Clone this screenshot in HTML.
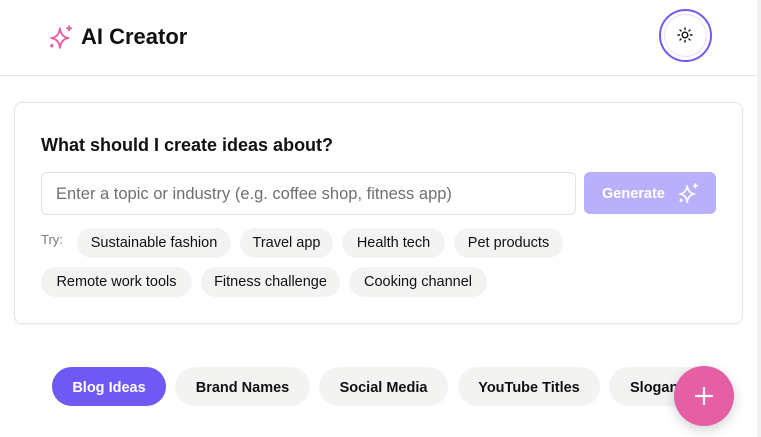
<!DOCTYPE html>
<html><head><meta charset="utf-8">
<style>
*{box-sizing:border-box;margin:0;padding:0}
body{width:761px;height:437px;overflow:hidden;background:#fff;font-family:"Liberation Sans",sans-serif;position:relative;color:#111}
.a{position:absolute}
.hdr{left:0;top:0;width:761px;height:76px;border-bottom:1px solid #e5e5e5}
.logo{left:81px;top:24px;font-size:22px;font-weight:bold;color:#111}
.theme{left:659px;top:9px;width:53px;height:53px;border-radius:50%;border:2px solid #6e5cf5;box-shadow:inset 0 0 0 3px #fff,inset 0 0 0 4px #e4e0fd}
.card{left:14px;top:102px;width:729px;height:222px;border:1px solid #e4e4e4;border-radius:8px;box-shadow:0 1px 2px rgba(0,0,0,.04)}
.title{left:41px;top:135px;font-size:18px;font-weight:bold;color:#111}
.inp{left:41px;top:172px;width:535px;height:43px;border:1px solid #e0e0e0;border-radius:6px;font-size:16.5px;color:#6f6f6f;padding:12px 0 0 14px;white-space:nowrap}
.gen{left:584px;top:172px;width:132px;height:42px;border-radius:6px;background:#b8b0fa;color:#fff;font-weight:bold;font-size:14.5px;padding:14px 0 0 18px}
.try{left:41px;top:232px;font-size:13px;color:#777}
.chip{height:30px;border-radius:15px;background:#f3f3f2;font-size:14.5px;color:#111;text-align:center;line-height:30px;white-space:nowrap}
.tab{top:367px;height:39px;border-radius:20px;background:#f3f3f2;font-size:14.5px;font-weight:bold;text-align:center;line-height:42px;color:#111;white-space:nowrap}
.fab{left:674px;top:366px;width:60px;height:60px;border-radius:50%;background:#e55fa5;box-shadow:0 4px 12px rgba(0,0,0,.18)}
.sb{left:757px;top:0;width:4px;height:437px;background:#f0f0f0}
</style></head><body>
<div class="a hdr"></div>
<svg class="a" style="left:48px;top:24px" width="26" height="26" viewBox="0 0 24 24" fill="none" stroke="#e55fa5" stroke-width="1.7" stroke-linejoin="round" stroke-linecap="round">
<path d="M11 4 Q12 12 19 13 Q12 14 11 22 Q10 14 3 13 Q10 12 11 4Z"/>
<path d="M19.5 2v4M17.5 4h4M3.5 19v2M2.5 20h2"/></svg>
<div class="a logo">AI Creator</div>
<div class="a theme"></div>
<svg class="a" style="left:677px;top:27px" width="16" height="16" viewBox="0 0 16 16" fill="none" stroke="#111" stroke-width="1.4" stroke-linecap="round">
<circle cx="8" cy="8" r="2.8"/><path d="M8 1v1.5M8 13.5V15M1 8h1.5M13.5 8H15M3 3l1 1M12 12l1 1M3 13l1-1M12 4l1-1"/></svg>
<div class="a card"></div>
<div class="a title">What should I create ideas about?</div>
<div class="a inp">Enter a topic or industry (e.g. coffee shop, fitness app)</div>
<div class="a gen">Generate</div>
<svg class="a" style="left:678px;top:182px" width="22" height="22" viewBox="0 0 24 24" fill="none" stroke="#fff" stroke-width="1.8" stroke-linejoin="round" stroke-linecap="round">
<path d="M10 4 Q11 12 18 13 Q11 14 10 22 Q9 14 2 13 Q9 12 10 4Z"/><path d="M19 2v4M17 4h4M3.5 19v2M2.5 20h2"/></svg>
<div class="a try">Try:</div>
<div class="a chip" style="left:77px;top:228px;width:154px">Sustainable fashion</div>
<div class="a chip" style="left:240px;top:228px;width:93px">Travel app</div>
<div class="a chip" style="left:342px;top:228px;width:103px">Health tech</div>
<div class="a chip" style="left:454px;top:228px;width:109px">Pet products</div>
<div class="a chip" style="left:41px;top:267px;width:151px">Remote work tools</div>
<div class="a chip" style="left:201px;top:267px;width:139px">Fitness challenge</div>
<div class="a chip" style="left:349px;top:267px;width:138px">Cooking channel</div>
<div class="a tab" style="left:52px;width:114px;background:#6e59f5;color:#fff">Blog Ideas</div>
<div class="a tab" style="left:175px;width:135px">Brand Names</div>
<div class="a tab" style="left:319px;width:129px">Social Media</div>
<div class="a tab" style="left:458px;width:142px">YouTube Titles</div>
<div class="a tab" style="left:609px;width:120px;text-align:left;padding-left:21px">Slogans</div>
<div class="a fab"></div>
<svg class="a" style="left:694px;top:386px" width="20" height="20" viewBox="0 0 20 20" stroke="#fff" stroke-width="2.2" stroke-linecap="round"><path d="M10 2v16M2 10h16"/></svg>
<div class="a sb"></div>
</body></html>
